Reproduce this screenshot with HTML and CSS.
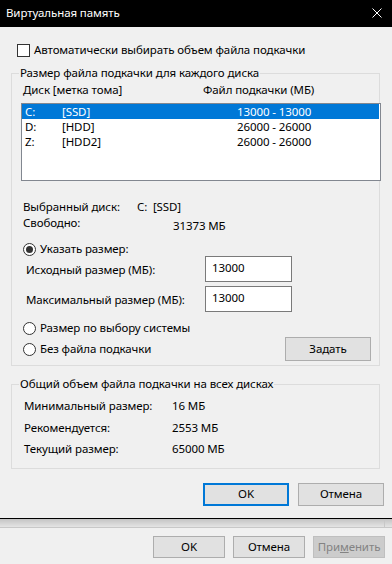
FILE: index.html
```html
<!DOCTYPE html>
<html lang="ru">
<head>
    <meta charset="UTF-8">
    <title>Виртуальная память</title>
    <link rel="stylesheet" href="styles.css">
</head>
<body>
    <div class="window">
        <div class="titlebar">
            <span class="title">Виртуальная память</span>
            <svg class="close" width="10" height="10" viewBox="0 0 10 10">
                <path d="M0.5 0.5 L9.5 9.5 M9.5 0.5 L0.5 9.5" stroke="#fff" stroke-width="1" fill="none"/>
            </svg>
        </div>

        <div class="content">
            <label class="check-row">
                <span class="checkbox"></span>
                Автоматически выбирать объем файла подкачки
            </label>

            <!-- Диски -->
            <fieldset class="group group-disks">
                <legend>Размер файла подкачки для каждого диска</legend>
                <div class="list-header">
                    <span class="col-head">Диск [метка тома]</span>
                    <span>Файл подкачки (МБ)</span>
                </div>
                <div class="listbox">
                    <div class="list-row selected">
                        <span class="c-letter">C:</span><span class="c-label">[SSD]</span><span>13000 - 13000</span>
                    </div>
                    <div class="list-row">
                        <span class="c-letter">D:</span><span class="c-label">[HDD]</span><span>26000 - 26000</span>
                    </div>
                    <div class="list-row">
                        <span class="c-letter">Z:</span><span class="c-label">[HDD2]</span><span>26000 - 26000</span>
                    </div>
                </div>

                <div class="info">
                    <div class="info-row">
                        <span class="key key-disk">Выбранный диск:</span><span>C:&nbsp; [SSD]</span>
                    </div>
                    <div class="info-row">
                        <span class="key key-free">Свободно:</span><span class="free">31373 МБ</span>
                    </div>
                </div>

                <label class="radio-row first">
                    <span class="radio checked"></span>Указать размер:
                </label>
                <div class="size-grid">
                    <span class="size-label">Исходный размер (МБ):</span>
                    <input class="size-input" type="text" value="13000">
                    <span class="size-label">Максимальный размер (МБ):</span>
                    <input class="size-input" type="text" value="13000">
                </div>
                <label class="radio-row system">
                    <span class="radio"></span>Размер по выбору системы
                </label>
                <div class="last-row">
                    <label class="radio-row">
                        <span class="radio"></span>Без файла подкачки
                    </label>
                    <button class="btn btn-set">Задать</button>
                </div>
            </fieldset>

            <!-- Итого -->
            <fieldset class="group group-total">
                <legend>Общий объем файла подкачки на всех дисках</legend>
                <div class="total">
                    <div class="total-row"><span class="total-key">Минимальный размер:</span><span>16 МБ</span></div>
                    <div class="total-row"><span class="total-key">Рекомендуется:</span><span>2553 МБ</span></div>
                    <div class="total-row"><span class="total-key">Текущий размер:</span><span>65000 МБ</span></div>
                </div>
            </fieldset>

            <div class="dialog-buttons">
                <button class="btn btn-default">OK</button>
                <button class="btn">Отмена</button>
            </div>
        </div>
    </div>

    <div class="parent">
        <div class="shadow-strip"><div class="panel-edge"></div></div>
        <div class="parent-buttons">
            <button class="btn btn-small">OK</button>
            <button class="btn btn-small">Отмена</button>
            <button class="btn btn-small btn-disabled">При<u>м</u>енить</button>
        </div>
    </div>
</body>
</html>
```

FILE: styles.css
```css
body {
    margin: 0;
    font-family: "Segoe UI", "Noto Sans", sans-serif;
    font-size: 11.5px;
    letter-spacing: -0.1px;
    line-height: 16px;
    color: #000;
    background-color: #f0f0f0;
    width: 392px;
    height: 564px;
    overflow: hidden;
}
.window {
    border-bottom: 1px solid #000;
}
.titlebar {
    height: 27px;
    background-color: #000;
    color: #fff;
    display: flex;
    align-items: center;
    justify-content: space-between;
    padding: 0 10px 0 6px;
}
.title {
    margin-top: -1px;
}
.close {
    display: block;
    margin-top: -2px;
}
.content {
    padding-bottom: 12px;
}
.check-row {
    display: flex;
    align-items: center;
    margin-top: 15px;
    padding-left: 17px;
    height: 16px;
}
.checkbox {
    width: 11px;
    height: 11px;
    border: 1px solid #333;
    background-color: #fff;
    margin-right: 4px;
}
.group {
    border: 1px solid #dcdcdc;
    margin: 0 0 0 11px;
    padding: 0;
    width: 369px;
    box-sizing: border-box;
    min-width: 0;
}
.group legend {
    margin-left: 7px;
    padding: 0 1px;
    line-height: 16px;
}
.group-disks {
    margin-top: 7px;
    padding-bottom: 4px;
}
.list-header {
    display: flex;
    margin-top: 1px;
    padding-left: 11px;
}
.col-head {
    width: 180px;
}
.listbox {
    margin: 5px 0 0 9px;
    width: 360px;
    height: 78px;
    box-sizing: border-box;
    border: 1px solid #828790;
    background-color: #fff;
    padding-right: 1px;
}
.list-row {
    display: flex;
    height: 15px;
    line-height: 15px;
    padding-left: 3px;
}
.list-row.selected {
    background-color: #0078d7;
    color: #fff;
}
.c-letter {
    width: 37px;
}
.c-label {
    width: 175px;
}
.info {
    margin-top: 18px;
    padding-left: 11px;
}
.info-row {
    display: flex;
}
.key-disk {
    width: 114px;
}
.key-free {
    width: 150px;
}
.free {
    padding-top: 3px;
    line-height: 16px;
}
.radio-row {
    display: flex;
    align-items: center;
    height: 16px;
    padding-left: 11px;
}
.radio-row.first {
    margin-top: 7px;
}
.radio {
    width: 11px;
    height: 11px;
    border: 1px solid #333;
    border-radius: 50%;
    background-color: #fff;
    margin-right: 4px;
    display: flex;
    align-items: center;
    justify-content: center;
}
.radio.checked::after {
    content: "";
    width: 7px;
    height: 7px;
    border-radius: 50%;
    background-color: #333;
}
.size-grid {
    display: grid;
    grid-template-columns: 179px 87px;
    grid-auto-rows: 26px;
    row-gap: 4px;
    align-items: center;
    margin-top: -1px;
    padding-left: 14px;
}
.size-label {
    padding-top: 2px;
}
.size-input {
    width: 87px;
    height: 26px;
    box-sizing: border-box;
    border: 1px solid #7a7a7a;
    background-color: #fff;
    font: inherit;
    letter-spacing: inherit;
    padding: 0 0 3px 6px;
    margin: 0;
    outline: none;
}
.radio-row.system {
    margin-top: 8px;
}
.last-row {
    display: flex;
    align-items: center;
    justify-content: space-between;
    margin-top: 1px;
    padding-right: 8px;
}
.btn {
    font: inherit;
    letter-spacing: inherit;
    color: #000;
    background-color: #e1e1e1;
    border: 1px solid #adadad;
    border-radius: 0;
    padding: 0;
    margin: 0;
    width: 86px;
    height: 23px;
    box-sizing: border-box;
}
.btn-set {
    height: 24px;
}
.btn-default {
    border: 2px solid #0078d7;
}
.group-total {
    margin-top: 10px;
}
.total {
    padding: 3px 0 8px 12px;
}
.total-row {
    display: flex;
    line-height: 21.5px;
}
.total-key {
    width: 148px;
}
.dialog-buttons {
    display: flex;
    justify-content: flex-end;
    gap: 9px;
    margin-top: 14px;
    padding-right: 8px;
}
.shadow-strip {
    height: 8px;
    background: linear-gradient(#c4c4c4, #e4e4e4);
    border-bottom: 1px solid #c8c8c8;
    display: flex;
}
.panel-edge {
    margin-left: 384px;
    width: 1px;
    background-color: #c8c8c8;
}
.parent-buttons {
    display: flex;
    justify-content: flex-end;
    gap: 8px;
    margin-top: 8px;
    padding-right: 7px;
}
.btn-small {
    width: 72px;
    height: 22px;
}
.btn-disabled {
    background-color: #cccccc;
    border-color: #bfbfbf;
    color: #838383;
}
```
